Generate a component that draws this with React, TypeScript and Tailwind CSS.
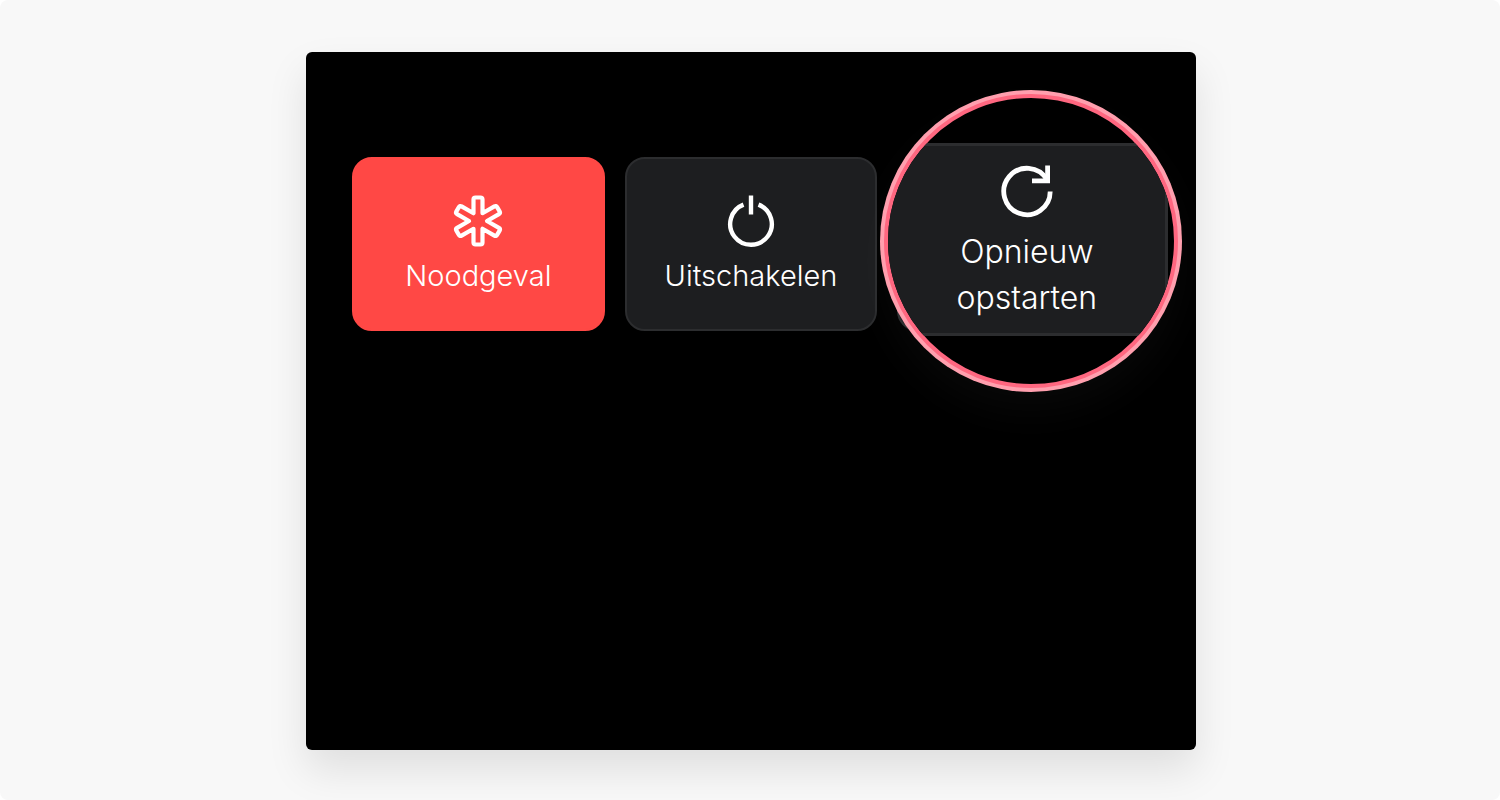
import type { ReactNode } from 'react'

function EmergencyIcon() {
    return (
        <svg className="size-14" viewBox="-28 -28 56 56" fill="none" stroke="currentColor" strokeWidth="4.2" strokeLinejoin="round" aria-hidden="true">
          <path d="M-4.5-7.8V-21.5Q-4.5-23.5-2.5-23.5H2.5Q4.5-23.5 4.5-21.5V-7.8L16.4-14.65Q18.1-15.65 19.1-13.9L21.6-9.6Q22.6-7.85 20.9-6.85L9 0L20.9 6.85Q22.6 7.85 21.6 9.6L19.1 13.9Q18.1 15.65 16.4 14.65L4.5 7.8V21.5Q4.5 23.5 2.5 23.5H-2.5Q-4.5 23.5-4.5 21.5V7.8L-16.4 14.65Q-18.1 15.65-19.1 13.9L-21.6 9.6Q-22.6 7.85-20.9 6.85L-9 0L-20.9-6.85Q-22.6-7.85-21.6-9.6L-19.1-13.9Q-18.1-15.65-16.4-14.65Z" />
        </svg>
    )
}

function PowerIcon() {
    return (
        <svg className="size-14" viewBox="0 0 56 56" fill="none" stroke="currentColor" strokeWidth="4.4" aria-hidden="true">
          <path d="M28 2.5V21.5" />
          <path d="M20.5 11.6A20.8 20.8 0 1 0 35.5 11.6" />
        </svg>
    )
}

function RestartIcon() {
    return (
        <svg className="size-15" viewBox="0 0 60 60" fill="none" stroke="currentColor" strokeWidth="4.8" aria-hidden="true">
          <path d="M53.2 30.5A23.2 23.2 0 1 1 50 18.7" />
          <path d="M50.6 4.5V19.8H35" />
        </svg>
    )
}

function ActionCard({ icon, label, className }: { icon: ReactNode; label: string; className: string }) {
    return (
        <button type="button" className={`flex h-[174px] flex-col items-center rounded-[20px] border-2 pt-[34px] text-white ${className}`}>
          {icon}
          <span className="mt-2 text-[29px]/[38px] font-light">{label}</span>
        </button>
    )
}

function RestartLens() {
    return (
        <div className="absolute -top-[67px] -left-[17px] size-[302px] rounded-full bg-[#ff9fae] p-1 shadow-[0_20px_40px_rgba(255,255,255,0.03)]">
          <div className="size-full overflow-hidden rounded-full border-4 border-[#ff6780] bg-black pt-[45px] pr-[6px]">
            <button type="button" className="flex h-[193px] w-full flex-col items-center rounded-r-[22px] border-[3px] border-l-0 border-[#2c2d2f] bg-[#1d1e20] pt-[15px] text-white">
              <RestartIcon />
              <span className="mt-2 text-[32px]/[46px] font-light">
                Opnieuw
                <br />
                opstarten
              </span>
            </button>
          </div>
        </div>
    )
}

export default function App() {
    return (
        <div className="bg-white">
          <main className="flex min-h-screen rounded-lg bg-[#f8f8f8] pt-[52px] pr-[22px] pb-[50px] pl-6 font-['Inter',sans-serif]">
            <section className="mx-auto w-full max-w-[890px] rounded-md bg-black px-[46px] pt-[105px] pb-12 shadow-[0_20px_40px_rgba(0,0,0,0.1)]">
              <div className="grid grid-cols-3 gap-5">
                <ActionCard icon={<EmergencyIcon />} label="Noodgeval" className="border-[#ff4845] bg-[#ff4845]" />
                <ActionCard icon={<PowerIcon />} label="Uitschakelen" className="border-[#2c2d2f] bg-[#1d1e20]" />
                <div className="relative">
                  <div className="h-[174px] rounded-[20px] border-2 border-[#2c2d2f] bg-[#1d1e20]" />
                  <RestartLens />
                </div>
              </div>
            </section>
          </main>
        </div>
    )
}
